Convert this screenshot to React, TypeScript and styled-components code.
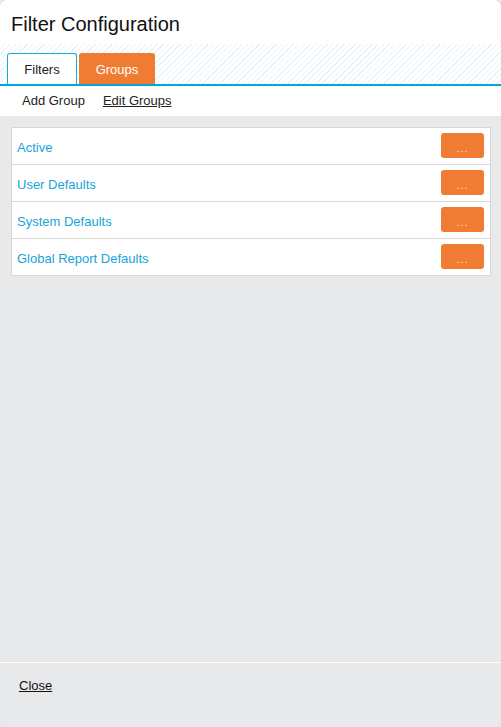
import styled, { createGlobalStyle } from "styled-components";

const GlobalStyle = createGlobalStyle`
  html, body {
    margin: 0;
    padding: 0;
    background: #ffffff;
  }
  * {
    box-sizing: border-box;
  }
`;

const Dialog = styled.div`
  width: 501px;
  height: 727px;
  display: flex;
  flex-direction: column;
  border-radius: 6px;
  overflow: hidden;
  background: #ffffff;
  box-shadow: 0 0 3px rgba(0, 0, 0, 0.45);
  font-family: "Liberation Sans", Arial, sans-serif;
  color: #1a1a1a;
`;

const Header = styled.div`
  height: 44px;
  display: flex;
  align-items: center;
  padding: 5px 11px 0;
  font-size: 20px;
  color: #111111;
`;

const TabStrip = styled.div`
  height: 42px;
  display: flex;
  align-items: flex-end;
  gap: 2px;
  padding: 0 7px;
  border-bottom: 2px solid #00a8d8;
  background: repeating-linear-gradient(
    135deg,
    #ffffff 0px,
    #ffffff 3px,
    #e6f4f9 3px,
    #e6f4f9 4px
  );
`;

const Tab = styled.div<{ $active?: boolean }>`
  height: 31px;
  width: ${(p) => (p.$active ? "76px" : "70px")};
  display: flex;
  align-items: center;
  justify-content: center;
  font-size: 13px;
  border-radius: 3px 3px 0 0;
  background: ${(p) => (p.$active ? "#f07c34" : "#ffffff")};
  color: ${(p) => (p.$active ? "#ffffff" : "#222222")};
  border: 1px solid ${(p) => (p.$active ? "#f07c34" : "#18a9d9")};
  border-bottom: none;
  cursor: pointer;
`;

const Toolbar = styled.div`
  height: 30px;
  display: flex;
  align-items: center;
  gap: 18px;
  padding: 0 22px 2px;
  font-size: 13px;
`;

const ToolLink = styled.span<{ $underline?: boolean }>`
  color: #222222;
  text-decoration: ${(p) => (p.$underline ? "underline" : "none")};
  cursor: pointer;
`;

const Body = styled.div`
  flex: 1;
  background: #e8e9eb;
  padding: 11px 10px 11px 11px;
`;

const List = styled.div`
  background: #ffffff;
  border: 1px solid #d6d7d9;
`;

const Row = styled.div`
  height: 37px;
  display: flex;
  align-items: center;
  justify-content: space-between;
  padding: 0 6px 0 5px;
  border-top: 1px solid #d8d9db;

  &:first-child {
    border-top: none;
    height: 36px;
  }
`;

const RowLabel = styled.span`
  color: #18a4d9;
  font-size: 13px;
  padding-top: 3px;
  cursor: pointer;
`;

const MoreButton = styled.button`
  width: 43px;
  height: 25px;
  margin-top: -1px;
  border: none;
  border-radius: 3px;
  background: #f07c34;
  color: #fde3d0;
  font-family: "Liberation Sans", Arial, sans-serif;
  font-size: 10px;
  letter-spacing: 1px;
  padding: 6px 0 0;
  cursor: pointer;
`;

const Footer = styled.div`
  height: 65px;
  background: #e8e9eb;
  border-top: 1px solid #ffffff;
  padding: 15px 19px;
  font-size: 13px;
`;

const CloseLink = styled.span`
  color: #111111;
  text-decoration: underline;
  cursor: pointer;
`;

const groups = ["Active", "User Defaults", "System Defaults", "Global Report Defaults"];

export default function App() {
  return (
    <>
      <GlobalStyle />
      <Dialog>
        <Header>Filter Configuration</Header>
        <TabStrip>
          <Tab>Filters</Tab>
          <Tab $active>Groups</Tab>
        </TabStrip>
        <Toolbar>
          <ToolLink>Add Group</ToolLink>
          <ToolLink $underline>Edit Groups</ToolLink>
        </Toolbar>
        <Body>
          <List>
            {groups.map((g) => (
              <Row key={g}>
                <RowLabel>{g}</RowLabel>
                <MoreButton>...</MoreButton>
              </Row>
            ))}
          </List>
        </Body>
        <Footer>
          <CloseLink>Close</CloseLink>
        </Footer>
      </Dialog>
    </>
  );
}
